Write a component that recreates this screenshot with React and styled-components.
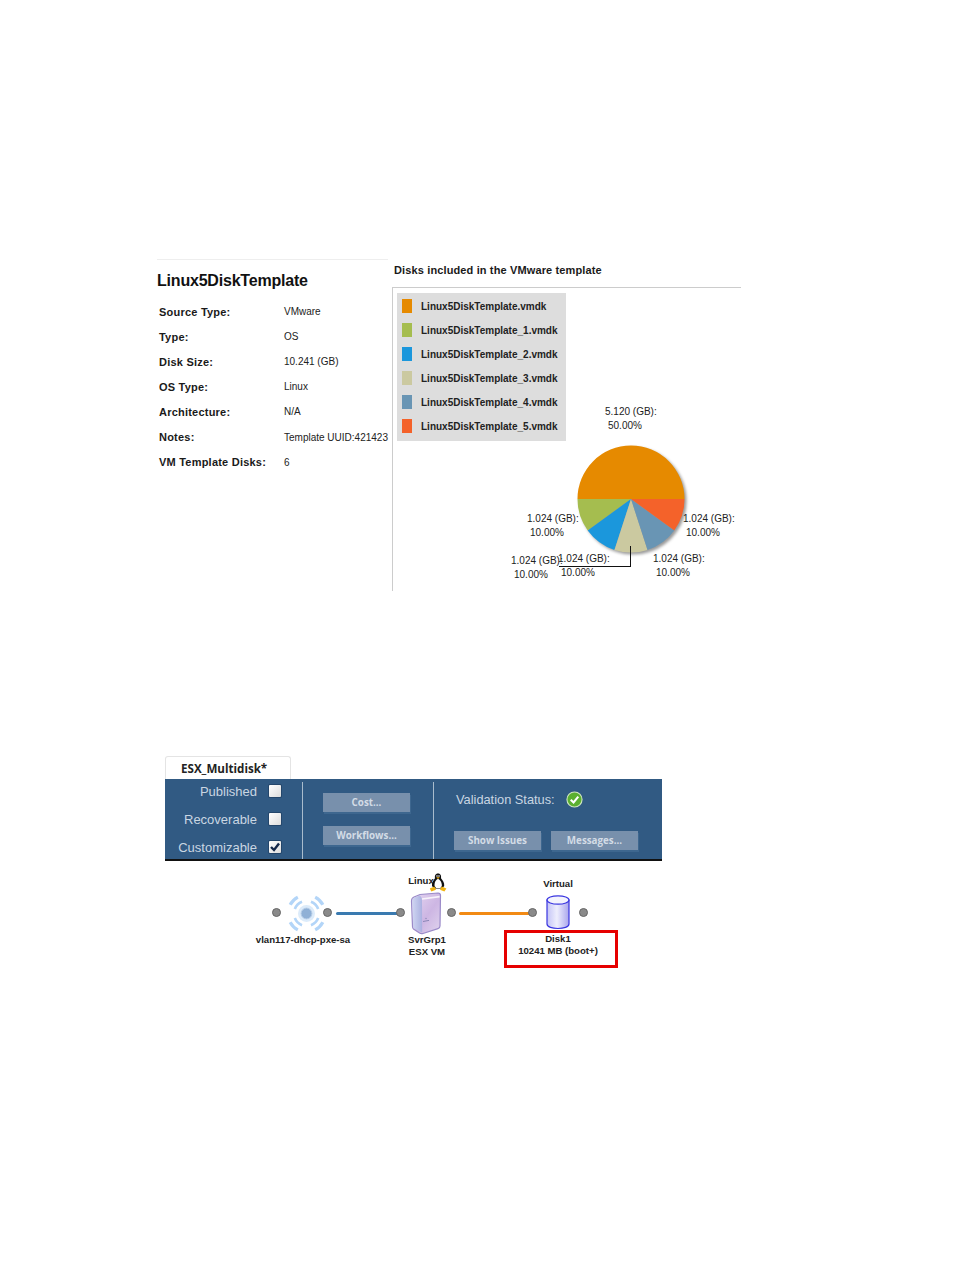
import styled, { createGlobalStyle } from "styled-components";

const GlobalStyle = createGlobalStyle`
  html, body {
    margin: 0;
    background: #fff;
    color: #111;
    font-family: "Liberation Sans", Arial, sans-serif;
  }
`;

const details = [
  ["Source Type:", "VMware"],
  ["Type:", "OS"],
  ["Disk Size:", "10.241 (GB)"],
  ["OS Type:", "Linux"],
  ["Architecture:", "N/A"],
  ["Notes:", "Template UUID:421423"],
  ["VM Template Disks:", "6"],
];

const disks = [
  ["Linux5DiskTemplate.vmdk", "#e68a00"],
  ["Linux5DiskTemplate_1.vmdk", "#a5bd4f"],
  ["Linux5DiskTemplate_2.vmdk", "#1b97dc"],
  ["Linux5DiskTemplate_3.vmdk", "#cbc9a0"],
  ["Linux5DiskTemplate_4.vmdk", "#6995b4"],
  ["Linux5DiskTemplate_5.vmdk", "#f4622a"],
];

const pieLabels = [
  { x: 212, y: 118 },
  { x: 290, y: 225 },
  { x: 260, y: 265 },
  { x: 165, y: 265 },
  { x: 118, y: 267 },
  { x: 134, y: 225 },
];

function polar(angle, r = 53.5) {
  const a = (angle * Math.PI) / 180;
  return [55 + r * Math.cos(a), 55 + r * Math.sin(a)];
}

function slicePath(from, to) {
  const [x1, y1] = polar(from);
  const [x2, y2] = polar(to);
  return `M55 55 L${x1} ${y1} A53.5 53.5 0 0 1 ${x2} ${y2} Z`;
}

function Pie() {
  // clockwise from 3 o'clock
  const slices = [
    [180, 360, "#e68a00"],
    [144, 180, "#a5bd4f"],
    [108, 144, "#1b97dc"],
    [72, 108, "#cbc9a0"],
    [36, 72, "#6995b4"],
    [0, 36, "#f4622a"],
  ];
  return (
    <PieSvg width="116" height="116" viewBox="0 0 116 116">
      {slices.map(([from, to, color]) => (
        <path key={color} d={slicePath(from, to)} fill={color} />
      ))}
    </PieSvg>
  );
}

function Penguin() {
  return (
    <svg width="18" height="19" viewBox="0 0 18 19">
      <path d="M9 0.5 C6.2 0.5 5.6 3 6 5.2 C4.2 7.4 2.6 10 3 13 L5 15.5 L13 15.5 L15.2 13 C15.6 10 13.8 7.2 12 5.2 C12.4 3 11.8 0.5 9 0.5 Z" fill="#111" />
      <path d="M9 6 C6.6 6.6 5.2 9.8 5.6 13 L7 15 L11.4 15 L12.8 13 C13 9.8 11.4 6.6 9 6 Z" fill="#fff" />
      <circle cx="8" cy="3" r="0.8" fill="#fff" />
      <circle cx="10" cy="3" r="0.8" fill="#fff" />
      <path d="M7.2 4.3 L10.8 4.3 L9 6 Z" fill="#f2b411" />
      <path d="M0.8 15.6 L5.4 13.6 L7 16.8 L2.4 18.4 Z" fill="#f2b411" />
      <path d="M11 16.8 L12.6 13.6 L17.4 15.6 L15.4 18.4 Z" fill="#f2b411" />
    </svg>
  );
}

function Server() {
  return (
    <svg width="32" height="43" viewBox="0 0 32 43">
      <defs>
        <linearGradient id="serverFront" x1="0" x2="1" y1="0" y2="1">
          <stop offset="0" stopColor="#e6d8f2" />
          <stop offset="0.55" stopColor="#cdb6e3" />
          <stop offset="1" stopColor="#e0d4ee" />
        </linearGradient>
        <linearGradient id="serverSide" x1="0" x2="1" y1="0" y2="0">
          <stop offset="0" stopColor="#d0d6f2" />
          <stop offset="1" stopColor="#aab0e0" />
        </linearGradient>
      </defs>
      <path d="M1.5 9 Q1.5 6 4 5 L10 2.5 L28 1 Q30.5 1 30.5 3.5 L30 34 Q30 36 28 36.6 L13 41.5 Q11 42 9.5 41 L3.5 37 Q2.5 36 2.5 34.5 Z" fill="url(#serverFront)" stroke="#9a8ac8" strokeWidth="1.2" />
      <path d="M2.2 9 Q2.2 6.4 4.4 5.6 L10 3.4 Q12 5 12 9 L12.2 40.6 L4 36.6 Q3.2 36 3.2 34.5 Z" fill="url(#serverSide)" />
      <path d="M12 7 L29.6 4.6" stroke="#f7f3fb" strokeWidth="1.6" fill="none" />
      <path d="M13 29.5 L19 28.4" stroke="#8a86b6" strokeWidth="1" />
      <circle cx="16" cy="26.5" r="0.7" fill="#8a86b6" />
    </svg>
  );
}

function Disk() {
  return (
    <svg width="26" height="36" viewBox="0 0 26 36">
      <defs>
        <linearGradient id="diskBody" x1="0" x2="1" y1="0" y2="0">
          <stop offset="0" stopColor="#c4c4f6" />
          <stop offset="0.45" stopColor="#eeeefd" />
          <stop offset="1" stopColor="#a9a5ec" />
        </linearGradient>
      </defs>
      <path d="M2 6 L2 30 C2 36 24 36 24 30 L24 6 Z" fill="url(#diskBody)" stroke="#3a36e0" strokeWidth="1.2" />
      <ellipse cx="13" cy="6" rx="11" ry="4.2" fill="#f4f4fd" stroke="#3a36e0" strokeWidth="1.2" />
    </svg>
  );
}

function arcPath(r, angle, spread) {
  const point = (deg) => {
    const a = (deg * Math.PI) / 180;
    return `${19.5 + r * Math.cos(a)} ${20.5 + r * Math.sin(a)}`;
  };
  return `M${point(angle - spread)} A${r} ${r} 0 0 1 ${point(angle + spread)}`;
}

function NetworkIcon() {
  const corners = [45, 135, 225, 315];
  return (
    <NetworkSvg width="39" height="41" viewBox="0 0 39 41">
      <g fill="none" stroke="#b3d5f8">
        {corners.map((angle) => (
          <path key={angle} d={arcPath(18.5, angle, 17)} strokeWidth="3.2" />
        ))}
        {corners.map((angle) => (
          <path key={angle} d={arcPath(12.5, angle, 24)} strokeWidth="2.6" />
        ))}
      </g>
      <circle cx="19.5" cy="20.5" r="8.5" fill="#dcebfa" />
      <circle cx="19.5" cy="20.5" r="5.4" fill="#8fb0d6" stroke="#b4cbe6" />
    </NetworkSvg>
  );
}

function CheckIcon() {
  return (
    <svg width="17" height="17" viewBox="0 0 18 18">
      <circle cx="9" cy="9" r="8" fill="#5bb030" stroke="#cfe6bf" strokeWidth="1.2" />
      <path d="M5 9.3 L8 12.2 L13 6" fill="none" stroke="#fff" strokeWidth="2.2" />
    </svg>
  );
}

export default function App() {
  return (
    <Page>
      <GlobalStyle />
      <InfoFigure>
        <DetailsPanel>
          <Title>Linux5DiskTemplate</Title>
          <DetailList>
            {details.map(([label, value]) => (
              <DetailRow key={label}>
                <DetailLabel>{label}</DetailLabel>
                <DetailValue>{value}</DetailValue>
              </DetailRow>
            ))}
          </DetailList>
        </DetailsPanel>
        <DisksPanel>
          <DisksHeading>Disks included in the VMware template</DisksHeading>
          <ChartBox>
            <Legend>
              {disks.map(([name, color]) => (
                <LegendRow key={name}>
                  <Swatch $color={color} />
                  <LegendName>{name}</LegendName>
                </LegendRow>
              ))}
            </Legend>
            <Pie />
            <LeaderLine />
            {pieLabels.map((label, i) => (
              <PieLabel key={label.x} $x={label.x} $y={label.y}>
                <div>{i === 0 ? "5.120 (GB):" : "1.024 (GB):"}</div>
                <PiePct>{i === 0 ? "50.00%" : "10.00%"}</PiePct>
              </PieLabel>
            ))}
          </ChartBox>
        </DisksPanel>
      </InfoFigure>

      <EditorFigure>
        <Tab>ESX_Multidisk*</Tab>
        <Toolbar>
          <FlagColumn>
            <FlagRow>
              <FlagLabel>Published</FlagLabel>
              <CheckBox />
            </FlagRow>
            <FlagRow>
              <FlagLabel>Recoverable</FlagLabel>
              <CheckBox />
            </FlagRow>
            <FlagRow>
              <FlagLabel>Customizable</FlagLabel>
              <CheckBox>
                <svg width="10" height="10" viewBox="0 0 10 10">
                  <path d="M1 5 L4 8 L9 1.5" fill="none" stroke="#14284a" strokeWidth="2.4" />
                </svg>
              </CheckBox>
            </FlagRow>
          </FlagColumn>
          <ActionColumn>
            <ToolButton>Cost...</ToolButton>
            <ToolButton>Workflows...</ToolButton>
          </ActionColumn>
          <StatusColumn>
            <StatusRow>
              <StatusLabel>Validation Status:</StatusLabel>
              <CheckIcon />
            </StatusRow>
            <StatusButtons>
              <ToolButton>Show Issues</ToolButton>
              <ToolButton>Messages...</ToolButton>
            </StatusButtons>
          </StatusColumn>
        </Toolbar>
        <Diagram>
          <Port $x={107} $y={47} />
          <IconSpot $x={122} $y={32}>
            <NetworkIcon />
          </IconSpot>
          <Port $x={158} $y={47} />
          <Wire $x={171} $y={51} $w={62} $color="#3a7ab0" />
          <Port $x={231} $y={47} />
          <CanvasText $x={78} $y={73} $w={120}>vlan117-dhcp-pxe-sa</CanvasText>

          <CanvasText $x={241} $y={14} $w={30}>Linux</CanvasText>
          <IconSpot $x={264} $y={12}>
            <Penguin />
          </IconSpot>
          <IconSpot $x={245} $y={31}>
            <Server />
          </IconSpot>
          <Port $x={282} $y={47} />
          <Wire $x={294} $y={51} $w={72} $color="#f28a14" />
          <Port $x={363} $y={47} />
          <CanvasText $x={232} $y={73} $w={60}>SvrGrp1</CanvasText>
          <CanvasText $x={232} $y={85} $w={60}>ESX VM</CanvasText>

          <CanvasText $x={363} $y={17} $w={60}>Virtual</CanvasText>
          <IconSpot $x={380} $y={33}>
            <Disk />
          </IconSpot>
          <Port $x={414} $y={47} />
          <Callout>
            <div>Disk1</div>
            <div>10241 MB (boot+)</div>
          </Callout>
        </Diagram>
      </EditorFigure>
    </Page>
  );
}

const Page = styled.div`
  width: 954px;
  height: 1270px;
  box-sizing: border-box;
  padding-top: 259px;
  overflow: hidden;
`;

const InfoFigure = styled.section`
  margin-left: 157px;
  width: 584px;
  height: 332px;
  display: flex;
  gap: 4px;
`;

const DetailsPanel = styled.div`
  width: 231px;
  border-top: 1px solid #eee;
`;

const Title = styled.h2`
  margin: 0;
  padding-top: 11px;
  font-size: 16px;
  line-height: 19px;
  font-weight: 700;
  letter-spacing: -0.2px;
  color: #111;
`;

const DetailList = styled.div`
  margin-top: 9px;
  padding-left: 2px;
  display: flex;
  flex-direction: column;
`;

const DetailRow = styled.div`
  height: 25.1px;
  display: flex;
  align-items: center;
`;

const DetailLabel = styled.span`
  width: 125px;
  flex: none;
  font-size: 11px;
  font-weight: 700;
  letter-spacing: 0.22px;
  white-space: nowrap;
  color: #1a1a1a;
`;

const DetailValue = styled.span`
  font-size: 10px;
  white-space: nowrap;
  color: #222;
`;

const DisksPanel = styled.div`
  flex: 1;
  display: flex;
  flex-direction: column;
`;

const DisksHeading = styled.h3`
  margin: 0 0 0 2px;
  height: 28px;
  box-sizing: border-box;
  padding-top: 5px;
  font-size: 11px;
  line-height: 12px;
  font-weight: 700;
  letter-spacing: 0.13px;
  white-space: nowrap;
  color: #1a1a1a;
`;

const ChartBox = styled.div`
  position: relative;
  flex: 1;
  border-top: 1px solid #ccc;
  border-left: 1px solid #ccc;
  padding: 5px 0 0 4px;
`;

const Legend = styled.div`
  width: 169px;
  height: 148px;
  box-sizing: border-box;
  padding-top: 1px;
  background: #ddd;
  display: flex;
  flex-direction: column;
`;

const LegendRow = styled.div`
  height: 24px;
  display: flex;
  align-items: center;
  padding-left: 5px;
  gap: 9px;
`;

const Swatch = styled.span`
  width: 10px;
  height: 14px;
  background: ${(p) => p.$color};
`;

const LegendName = styled.span`
  font-size: 10px;
  font-weight: 700;
  color: #222;
  white-space: nowrap;
`;

const PieSvg = styled.svg`
  position: absolute;
  left: 182.5px;
  top: 156px;
  filter: drop-shadow(2px 2px 1.5px rgba(0, 0, 0, 0.4));
`;

const LeaderLine = styled.div`
  position: absolute;
  left: 166px;
  top: 258px;
  width: 72px;
  height: 21px;
  box-sizing: border-box;
  border-right: 1px solid #111;
  border-bottom: 1px solid #111;
`;

const PieLabel = styled.div`
  position: absolute;
  left: ${(p) => p.$x}px;
  top: ${(p) => p.$y}px;
  font-size: 10px;
  line-height: 11px;
  color: #222;
  white-space: nowrap;
`;

const PiePct = styled.div`
  margin-top: 3px;
  padding-left: 3px;
`;

const EditorFigure = styled.section`
  margin: 165px 0 0 165px;
  width: 497px;
`;

const Tab = styled.div`
  width: 126px;
  height: 23px;
  box-sizing: border-box;
  border: 1px solid #e4e4e4;
  border-bottom: 0;
  border-radius: 3px 3px 0 0;
  padding: 5px 0 0 15px;
  font-family: "Open Sans", sans-serif;
  font-size: 11.6px;
  line-height: 14px;
  font-weight: 700;
  color: #222;
`;

const Toolbar = styled.div`
  height: 82px;
  box-sizing: border-box;
  background: #315a83;
  border-bottom: 2px solid #111;
  display: flex;
`;

const FlagColumn = styled.div`
  width: 138px;
  box-sizing: border-box;
  border-right: 1px solid #a9bccd;
  margin-top: 3px;
  padding: 0 21px 2px 0;
  display: flex;
  flex-direction: column;
  align-items: flex-end;
  justify-content: center;
`;

const FlagRow = styled.div`
  height: 28px;
  flex: none;
  display: flex;
  align-items: center;
  gap: 12px;
`;

const FlagLabel = styled.span`
  font-size: 13px;
  color: #c9d6e2;
  white-space: nowrap;
`;

const CheckBox = styled.span`
  width: 12px;
  height: 12px;
  margin-top: -2px;
  display: flex;
  align-items: center;
  justify-content: center;
  border-radius: 1px;
  background: linear-gradient(135deg, #fff, #dcdcdc);
  box-shadow: 0 0 0 1px #24466b;
`;

const ActionColumn = styled.div`
  width: 131px;
  box-sizing: border-box;
  margin-top: 3px;
  border-right: 1px solid #a9bccd;
  padding: 11px 0 0 20px;
  display: flex;
  flex-direction: column;
  gap: 14px;
`;

const ToolButton = styled.div`
  width: 87px;
  height: 19px;
  background: #7890ac;
  box-shadow: 1px 2px 0 #3e678f;
  display: flex;
  align-items: center;
  justify-content: center;
  font-family: "Open Sans", sans-serif;
  font-size: 9.8px;
  font-weight: 700;
  color: #d3dce6;
  white-space: nowrap;
`;

const StatusColumn = styled.div`
  flex: 1;
  padding-left: 20px;
  display: flex;
  flex-direction: column;
`;

const StatusRow = styled.div`
  height: 41px;
  padding-left: 2px;
  display: flex;
  align-items: center;
  gap: 11px;
`;

const StatusLabel = styled.span`
  font-size: 12.8px;
  color: #c9d6e2;
  white-space: nowrap;
`;

const StatusButtons = styled.div`
  margin-top: 11px;
  display: flex;
  gap: 10px;
`;

const Diagram = styled.div`
  position: relative;
  height: 108px;
`;

const Port = styled.span`
  position: absolute;
  left: ${(p) => p.$x}px;
  top: ${(p) => p.$y}px;
  width: 7px;
  height: 7px;
  border-radius: 50%;
  background: #8a8a8a;
  border: 1px solid #666;
`;

const Wire = styled.span`
  position: absolute;
  left: ${(p) => p.$x}px;
  top: ${(p) => p.$y}px;
  width: ${(p) => p.$w}px;
  height: 3px;
  border-radius: 2px;
  background: ${(p) => p.$color};
`;

const IconSpot = styled.div`
  position: absolute;
  left: ${(p) => p.$x}px;
  top: ${(p) => p.$y}px;
  line-height: 0;
`;

const NetworkSvg = styled.svg`
  filter: blur(0.4px);
`;

const CanvasText = styled.div`
  position: absolute;
  left: ${(p) => p.$x}px;
  top: ${(p) => p.$y}px;
  width: ${(p) => p.$w}px;
  text-align: center;
  font-size: 9.6px;
  line-height: 12px;
  font-weight: 700;
  color: #222;
  white-space: nowrap;
`;

const Callout = styled.div`
  position: absolute;
  left: 339px;
  top: 69px;
  width: 114px;
  height: 38px;
  box-sizing: border-box;
  border: 3px solid #e60000;
  padding-right: 6px;
  text-align: center;
  font-size: 9.6px;
  line-height: 11.5px;
  font-weight: 700;
  color: #222;
`;
